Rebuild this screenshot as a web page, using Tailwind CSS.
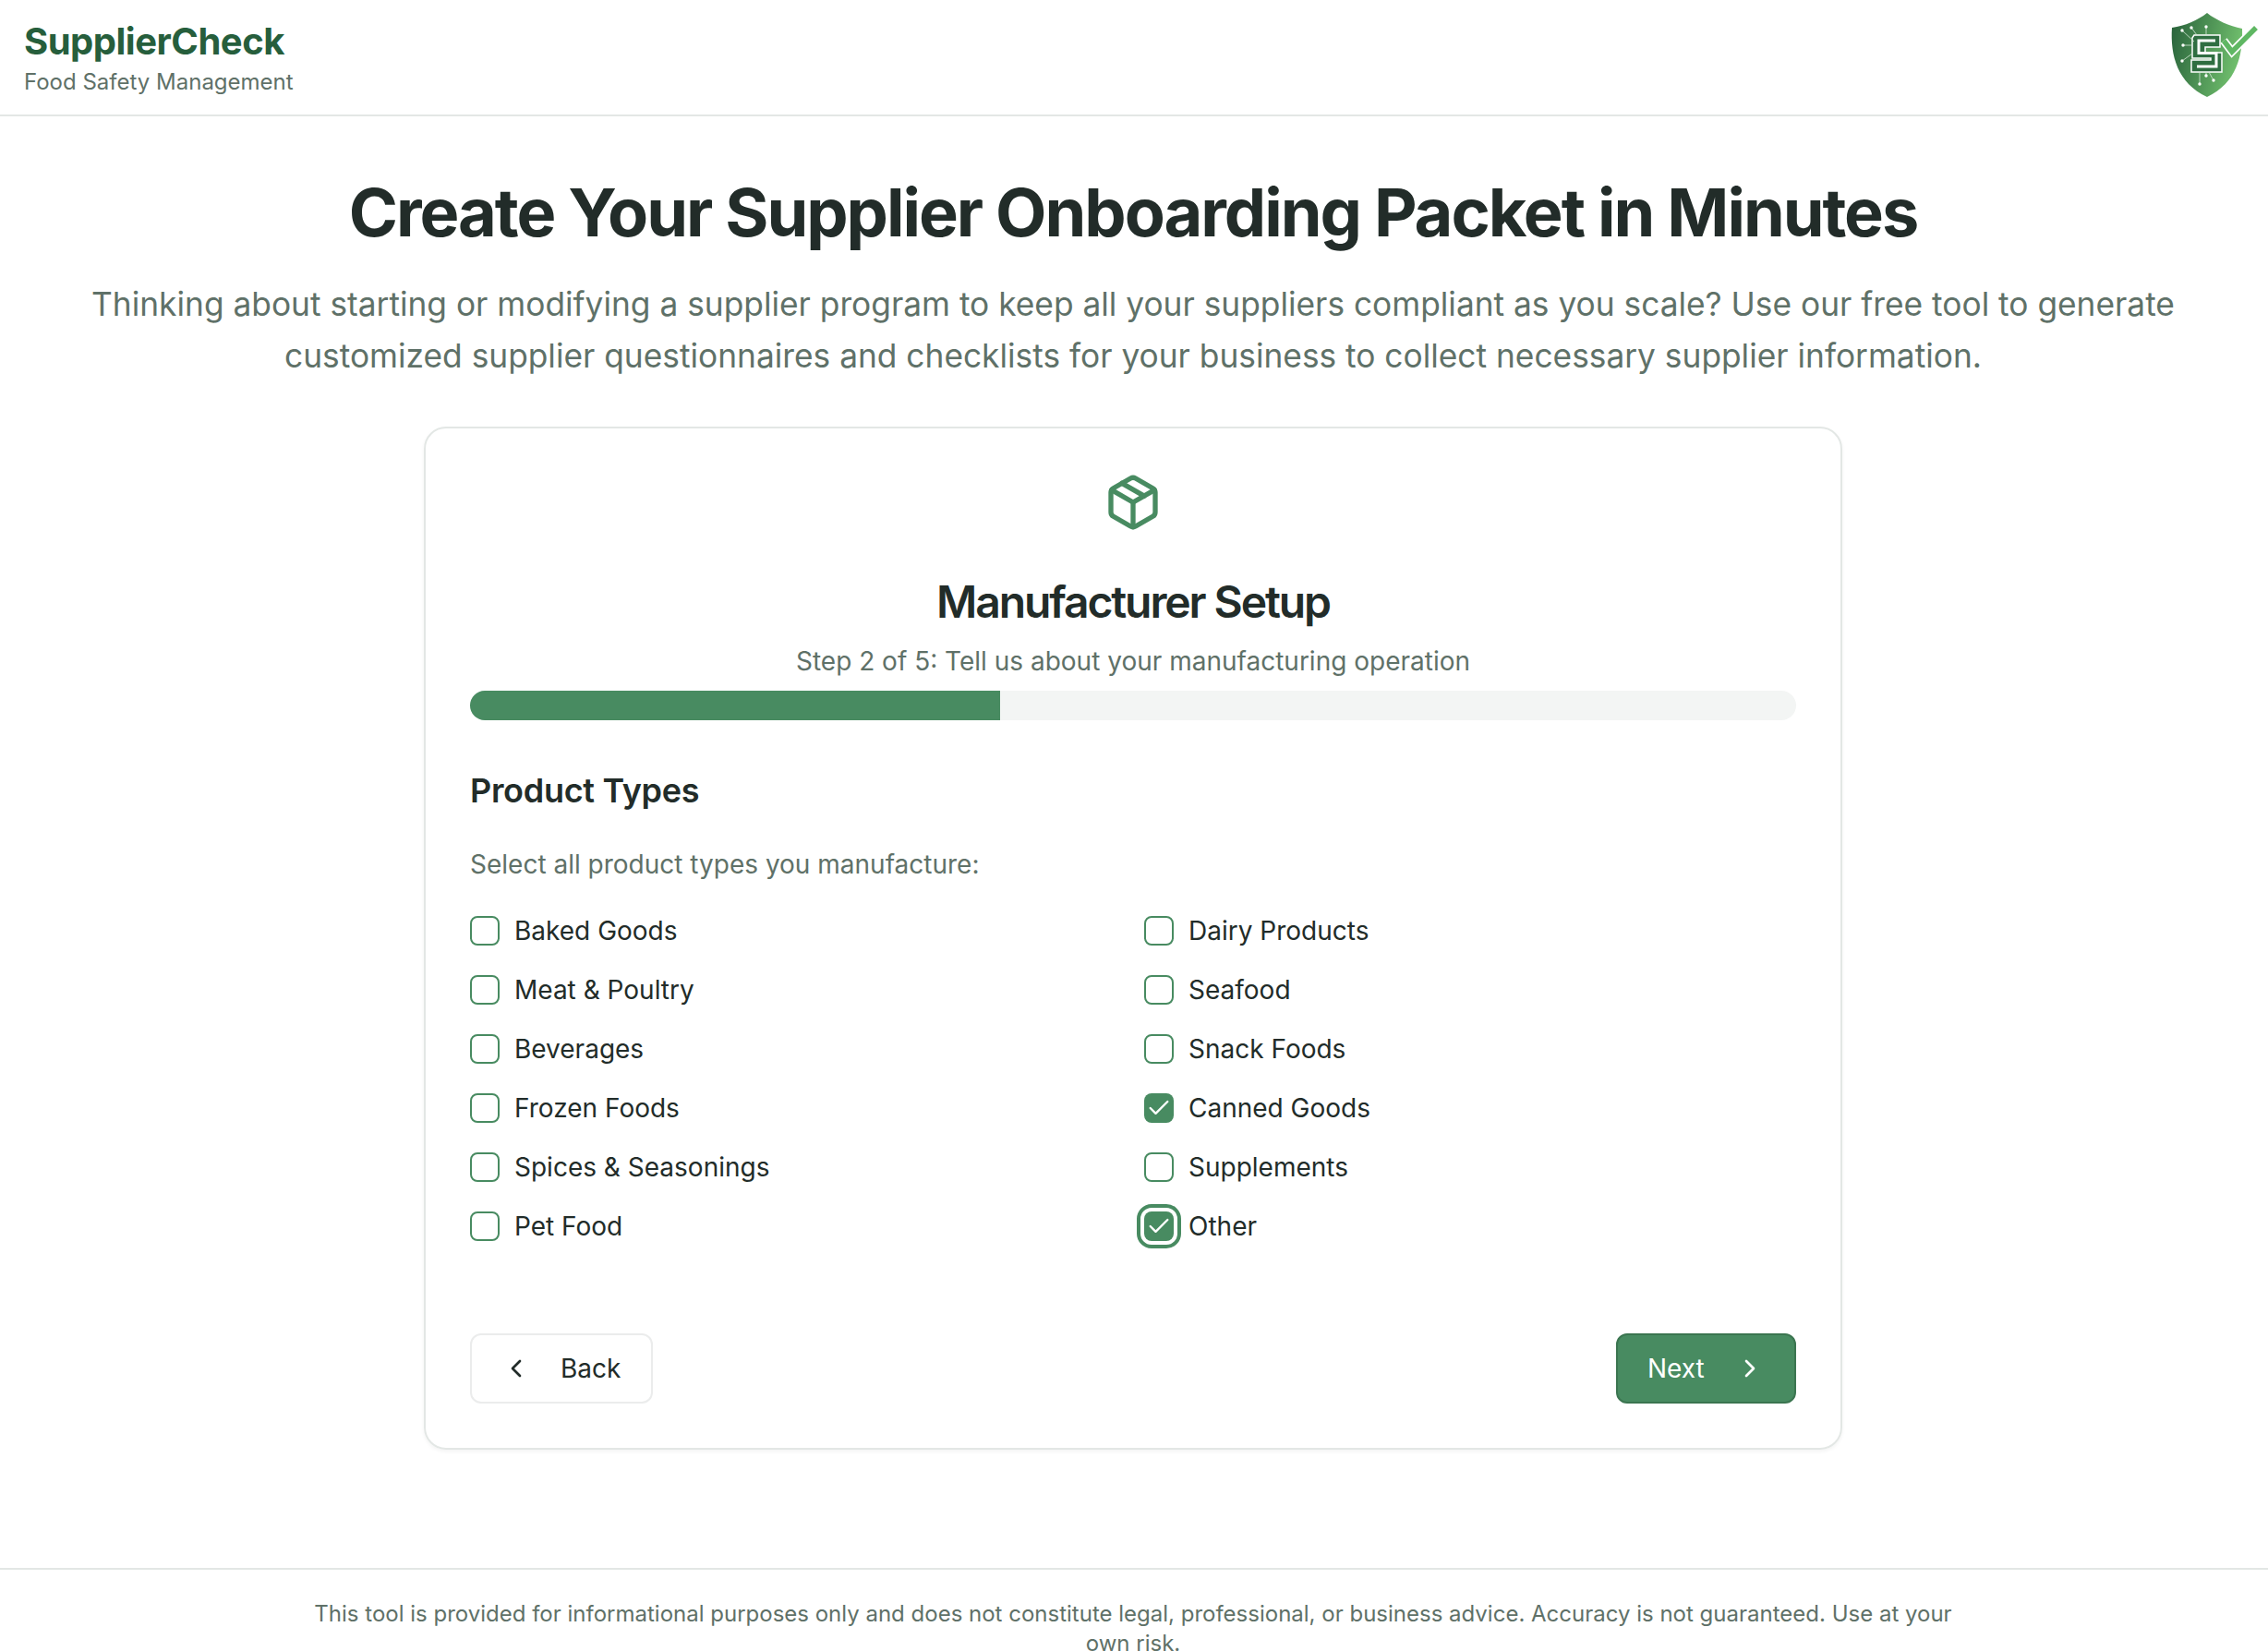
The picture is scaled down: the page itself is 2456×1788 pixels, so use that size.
<!DOCTYPE html>
<html lang="en"><head><meta charset="utf-8"><title>SupplierCheck</title>
<script src="https://cdn.jsdelivr.net/npm/@tailwindcss/browser@4"></script></head>
<body class="bg-white overflow-hidden font-['Inter',sans-serif] text-[#222c29]">
<div class="h-[1788px] flex flex-col overflow-hidden">
<header class="h-[126px] shrink-0 border-b-2 border-[#e3e7e5] px-[26px] pb-[3px] flex items-center justify-between">
  <div class="flex flex-col">
    <div class="text-[40px] leading-[56px] font-bold tracking-[-0.5px] text-[#265e3c]">SupplierCheck</div>
    <div class="text-[24px] leading-[32px] text-[#5f7168]">Food Safety Management</div>
  </div>
  <svg class="w-[105px] h-[100px] mr-[-21px] mt-[3px]" viewBox="30 12 105 100" fill="none">
    <defs><linearGradient id="g" x1="0" y1="0" x2="1" y2="0.25"><stop offset="0" stop-color="#27603a"/><stop offset="1" stop-color="#6fbd6c"/></linearGradient></defs>
    <path d="M74 14 C84 22 98 28 112 31 C113 60 106 90 74 105 C42 90 34 60 36 30 C50 28 64 22 74 14Z" fill="url(#g)"/>
    <path d="M92 44 L101 56 L127 30" stroke="#fff" stroke-width="9"/>
    <path d="M92 44 L101 56 L127 30" stroke="#5fb763" stroke-width="5.500"/>
    <path d="M60 38H88V51H72V57H90V78H57V65H78V63H58V41Z" stroke="#fff" stroke-width="1.500" fill="#2f6e41"/>
    <path d="M83 44H65V57.500H84V72H63" stroke="#fff" stroke-width="3"/>
    <path d="M47 33L60 45M57 30L63 38M73 29V38M48 49H58M47 66L58 58M66 91V78M81 87L76 78M73 82V78" stroke="#d5e8d7" stroke-width="0.800"/>
    <g fill="#fff"><circle cx="47" cy="33" r="1.700"/><circle cx="57" cy="30" r="1.700"/><circle cx="73" cy="29" r="1.700"/><circle cx="48" cy="49" r="1.700"/><circle cx="47" cy="66" r="1.700"/><circle cx="66" cy="91" r="1.700"/><circle cx="81" cy="87" r="1.700"/><circle cx="73" cy="82" r="1.700"/></g>
  </svg>
</header>
<main class="flex-1 flex flex-col items-center pr-[2px]">
  <h1 class="mt-[60px] text-[72px] leading-[88px] font-[650] tracking-[-2.03px] text-[#222c29]">Create Your Supplier Onboarding Packet in Minutes</h1>
  <p class="mt-[28px] w-[2300px] text-center text-[35.3px] leading-[56px] text-[#5f7168]">Thinking about starting or modifying a supplier program to keep all your suppliers compliant as you scale? Use our free tool to generate customized supplier questionnaires and checklists for your business to collect necessary supplier information.</p>
  <section class="mt-[48px] w-[1536px] h-[1108px] shrink-0 border-2 border-[#e3e7e5] rounded-[24px] px-[48px] pt-[48px] shadow-[0_2px_4px_rgba(0,0,0,0.05)] flex flex-col">
    <div class="flex justify-center">
      <svg class="w-[64px] h-[64px]" viewBox="0 0 24 24" fill="none" stroke="#488b61" stroke-width="2" stroke-linecap="round" stroke-linejoin="round"><path d="M21 8a2 2 0 0 0-1-1.730l-7-4a2 2 0 0 0-2 0l-7 4A2 2 0 0 0 3 8v8a2 2 0 0 0 1 1.730l7 4a2 2 0 0 0 2 0l7-4A2 2 0 0 0 21 16Z"/><path d="m7.500 4.270 9 5.150"/><path d="M3.300 7 12 12l8.700-5"/><path d="M12 22V12"/></svg>
    </div>
    <h2 class="mt-[44px] text-center text-[48px] leading-[64px] font-semibold tracking-[-2.1px]">Manufacturer Setup</h2>
    <p class="mt-[12px] text-center text-[28px] leading-[40px] text-[#5f7168]">Step 2 of 5: Tell us about your manufacturing operation</p>
    <div class="mt-[12px] h-[32px] rounded-full bg-[#f3f5f4] overflow-hidden"><div class="h-full w-[40%] bg-[#488b61]"></div></div>
    <h3 class="mt-[52px] text-[36px] leading-[48px] font-semibold tracking-[-0.3px]">Product Types</h3>
    <p class="mt-[36px] text-[28px] leading-[40px] text-[#5f7168]">Select all product types you manufacture:</p>
    <div class="mt-[32px] grid grid-cols-2 gap-x-[24px] gap-y-[24px] text-[28px] leading-[40px]">
      <label class="flex items-center gap-[16px]"><span class="w-[32px] h-[32px] rounded-[8px] border-2 border-[#488b61]"></span>Baked Goods</label>
      <label class="flex items-center gap-[16px]"><span class="w-[32px] h-[32px] rounded-[8px] border-2 border-[#488b61]"></span>Dairy Products</label>
      <label class="flex items-center gap-[16px]"><span class="w-[32px] h-[32px] rounded-[8px] border-2 border-[#488b61]"></span>Meat &amp; Poultry</label>
      <label class="flex items-center gap-[16px]"><span class="w-[32px] h-[32px] rounded-[8px] border-2 border-[#488b61]"></span>Seafood</label>
      <label class="flex items-center gap-[16px]"><span class="w-[32px] h-[32px] rounded-[8px] border-2 border-[#488b61]"></span>Beverages</label>
      <label class="flex items-center gap-[16px]"><span class="w-[32px] h-[32px] rounded-[8px] border-2 border-[#488b61]"></span>Snack Foods</label>
      <label class="flex items-center gap-[16px]"><span class="w-[32px] h-[32px] rounded-[8px] border-2 border-[#488b61]"></span>Frozen Foods</label>
      <label class="flex items-center gap-[16px]"><span class="w-[32px] h-[32px] rounded-[8px] bg-[#488b61] flex items-center justify-center"><svg class="w-[28px] h-[28px]" viewBox="0 0 24 24" fill="none" stroke="#fff" stroke-width="2" stroke-linecap="round" stroke-linejoin="round"><path d="M20 6 9 17l-5-5"/></svg></span>Canned Goods</label>
      <label class="flex items-center gap-[16px]"><span class="w-[32px] h-[32px] rounded-[8px] border-2 border-[#488b61]"></span>Spices &amp; Seasonings</label>
      <label class="flex items-center gap-[16px]"><span class="w-[32px] h-[32px] rounded-[8px] border-2 border-[#488b61]"></span>Supplements</label>
      <label class="flex items-center gap-[16px]"><span class="w-[32px] h-[32px] rounded-[8px] border-2 border-[#488b61]"></span>Pet Food</label>
      <label class="flex items-center gap-[16px]"><span class="w-[32px] h-[32px] rounded-[8px] bg-[#488b61] flex items-center justify-center outline-[4px] outline-offset-[4px] outline-[#488b61]"><svg class="w-[28px] h-[28px]" viewBox="0 0 24 24" fill="none" stroke="#fff" stroke-width="2" stroke-linecap="round" stroke-linejoin="round"><path d="M20 6 9 17l-5-5"/></svg></span>Other</label>
    </div>
    <div class="mt-[96px] flex justify-between">
      <button class="h-[76px] w-[198px] border-2 border-[#ebecec] rounded-[12px] flex items-center pl-[32px] gap-[32px] text-[28px]"><svg class="w-[32px] h-[32px] shrink-0" viewBox="0 0 24 24" fill="none" stroke="currentColor" stroke-width="2" stroke-linecap="round" stroke-linejoin="round"><path d="m15 18-6-6 6-6"/></svg>Back</button>
      <button class="h-[76px] w-[195px] border-2 border-[#3b7550] bg-[#488b61] text-white rounded-[12px] flex items-center pl-[32px] gap-[33px] text-[28px]">Next<svg class="w-[32px] h-[32px] shrink-0" viewBox="0 0 24 24" fill="none" stroke="currentColor" stroke-width="2" stroke-linecap="round" stroke-linejoin="round"><path d="m9 18 6-6-6-6"/></svg></button>
    </div>
  </section>
</main>
<footer class="h-[90px] shrink-0 border-t-2 border-[#e3e7e5] pt-[32px] pr-[2px] flex justify-center">
  <p class="w-[1800px] text-center text-[24px] leading-[32px] text-[#5f7168]">This tool is provided for informational purposes only and does not constitute legal, professional, or business advice. Accuracy is not guaranteed. Use at your own risk.</p>
</footer>
</div>
</body></html>
